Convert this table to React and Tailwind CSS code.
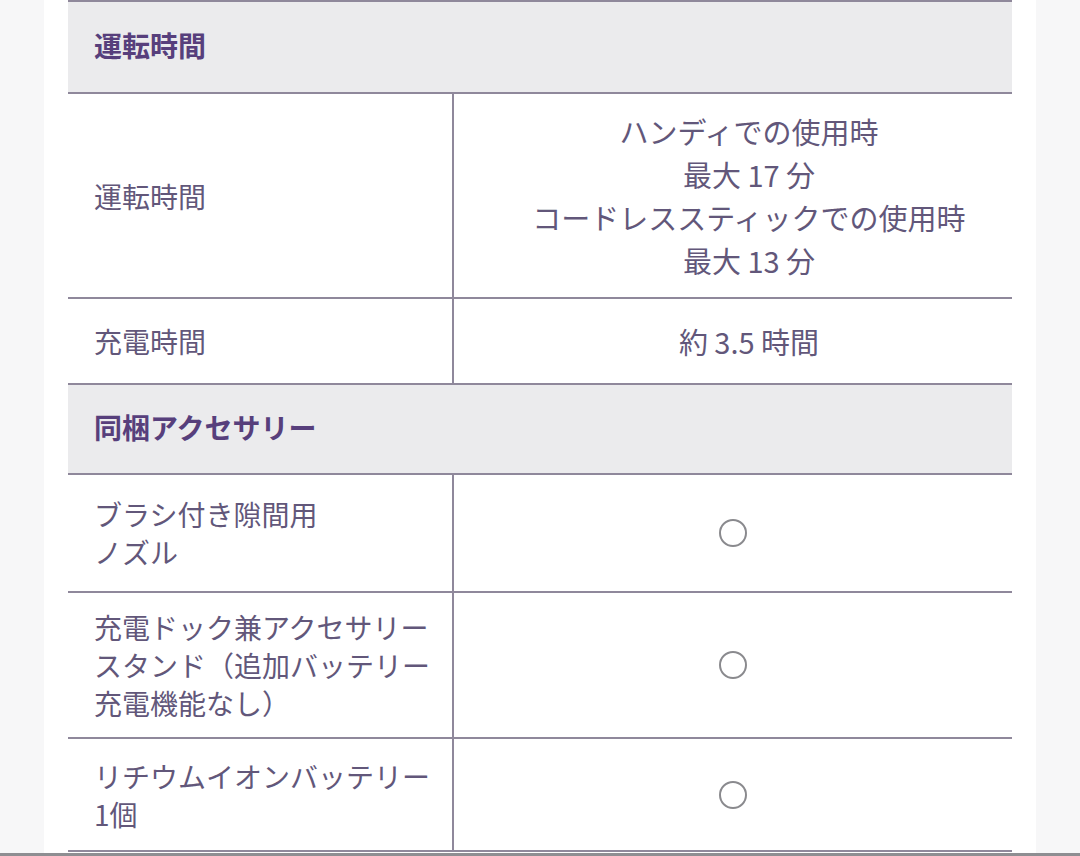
const sections = [
  {
    title: "運転時間",
    headerHeight: "h-[92px]",
    rows: [
      {
        label: ["運転時間"],
        value: ["ハンディでの使用時", "最大 17 分", "コードレススティックでの使用時", "最大 13 分"],
        height: "h-[205px]",
      },
      { label: ["充電時間"], value: ["約 3.5 時間"], height: "h-[86px]" },
    ],
  },
  {
    title: "同梱アクセサリー",
    headerHeight: "h-[90px]",
    rows: [
      { label: ["ブラシ付き隙間用", "ノズル"], check: true, height: "h-[118px]" },
      {
        label: ["充電ドック兼アクセサリー", "スタンド（追加バッテリー", "充電機能なし）"],
        check: true,
        height: "h-[146px]",
      },
      { label: ["リチウムイオンバッテリー", "1個"], check: true, height: "h-[113px]" },
    ],
  },
];

function SpecRow({ row }) {
  return (
    <div className={`flex border-b-2 border-[#8f889b] ${row.height}`}>
      <div className="w-[386px] shrink-0 border-r-2 border-[#8f889b] pl-[26px] flex flex-col justify-center text-[28px] leading-[38px] text-[#62577a]">
        {row.label.map((line) => (
          <span key={line}>{line}</span>
        ))}
      </div>
      <div className="flex-1 flex flex-col items-center justify-center">
        {row.check ? (
          <div className="w-[28px] h-[28px] rounded-full border-2 border-[#8a8a8e]" />
        ) : (
          <div className="pl-[32px] flex flex-col items-center text-[29px] leading-[43px] text-[#62577a]">
            {row.value.map((line) => (
              <span key={line}>{line}</span>
            ))}
          </div>
        )}
      </div>
    </div>
  );
}

export default function App() {
  return (
    <div
      className="w-[1080px] h-[856px] flex flex-col bg-[#f7f7f8] overflow-hidden"
      style={{ fontFamily: '"Noto Sans CJK JP", "Noto Sans", sans-serif' }}
    >
      <div className="flex-1 flex justify-center">
        <div className="w-[992px] bg-white px-[24px]">
          <div className="border-t-2 border-[#8f889b]">
            {sections.map((section) => (
              <div key={section.title}>
                {/* Section header */}
                <div
                  className={`${section.headerHeight} bg-[#ebebed] border-b-2 border-[#8f889b] flex items-center pl-[26px] pb-[5px]`}
                >
                  <h3 className="text-[28px] font-bold text-[#573f7c]">{section.title}</h3>
                </div>
                {section.rows.map((row) => (
                  <SpecRow key={row.label[0]} row={row} />
                ))}
              </div>
            ))}
          </div>
        </div>
      </div>
      <div className="h-[3px] bg-[#8e8e92]" />
    </div>
  );
}
